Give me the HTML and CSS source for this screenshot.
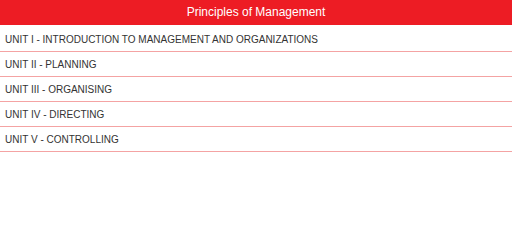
FILE: index.html
```html
<!DOCTYPE html>
<html lang="en">
<head>
    <meta charset="UTF-8">
    <meta name="viewport" content="width=device-width, initial-scale=1.0">
    <title>Principles of Management</title>
    <link rel="stylesheet" href="styles.css">
</head>
<body>
    <header class="title-bar">Principles of Management</header>
    <ul class="unit-list">
        <li><a href="#">UNIT I - INTRODUCTION TO MANAGEMENT AND ORGANIZATIONS</a></li>
        <li><a href="#">UNIT II - PLANNING</a></li>
        <li><a href="#">UNIT III - ORGANISING</a></li>
        <li><a href="#">UNIT IV - DIRECTING</a></li>
        <li><a href="#">UNIT V - CONTROLLING</a></li>
    </ul>
</body>
</html>
```
FILE: styles.css
```css
body {
    font-family: "Liberation Sans", Arial, sans-serif;
    margin: 0;
    padding: 0;
    background-color: #fff;
}
.title-bar {
    background-color: #ed1c24;
    color: #fff;
    height: 25px;
    line-height: 24px;
    font-size: 12px;
    text-align: center;
}
.unit-list {
    list-style: none;
    margin: 0;
    padding: 0;
}
.unit-list li {
    border-bottom: 1px solid #f4a3a3;
}
.unit-list li:first-child a {
    height: 25px;
    padding-top: 1px;
    line-height: 28px;
}
.unit-list li a {
    display: block;
    height: 23px;
    padding: 1px 5px 0;
    line-height: 24px;
    font-size: 10px;
    color: #333;
    text-decoration: none;
}
```
